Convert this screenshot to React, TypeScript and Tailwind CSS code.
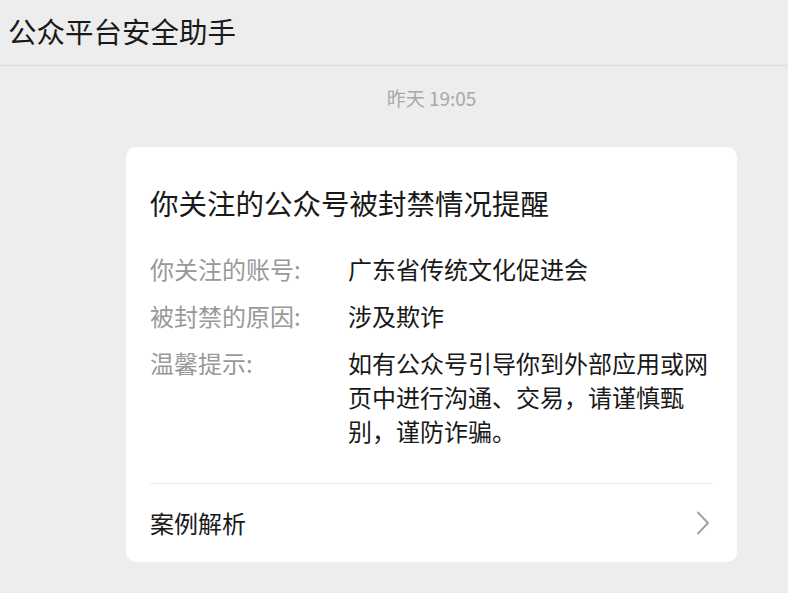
import React from 'react';

const rows = [
  { label: '你关注的账号:', value: '广东省传统文化促进会' },
  { label: '被封禁的原因:', value: '涉及欺诈' },
  { label: '温馨提示:', value: '如有公众号引导你到外部应用或网页中进行沟通、交易，请谨慎甄别，谨防诈骗。' },
];

const App: React.FC = () => {
  return (
    <div
      className="min-h-[593px] w-full bg-[#ededed] text-[#191919]"
      style={{ fontFamily: '"Noto Sans CJK SC", "Noto Sans", sans-serif' }}
    >
      {/* Header */}
      <div className="flex h-[66px] items-center border-b border-[#dcdcdc] px-[8px] pb-[3px]">
        <h1 className="text-[28.5px] leading-[36px] font-normal">公众平台安全助手</h1>
      </div>

      <div className="ml-[126px] w-[611px]">
        {/* Timestamp */}
        <div className="mt-[20px] text-center text-[19px] leading-[24px] text-[#a8a8a8]">昨天 19:05</div>

        {/* Card */}
        <div className="mt-[37px] rounded-[10px] bg-white px-6">
          <h2 className="pt-[34px] text-[28.5px] leading-[44px] font-normal">你关注的公众号被封禁情况提醒</h2>

          <div className="mt-[27px] flex flex-col gap-[13px]">
            {rows.map((row) => (
              <div key={row.label} className="flex text-[24px] leading-[34px]">
                <div className="w-[198px] shrink-0 text-[#999999]">{row.label}</div>
                <div className="w-[362px]">{row.value}</div>
              </div>
            ))}
          </div>

          <div className="mt-[35px] flex h-[79px] items-center justify-between border-t border-[#ececec]">
            <span className="text-[24px] leading-[34px]">案例解析</span>
            <svg width="14" height="26" viewBox="0 0 14 26" className="mr-[3px]">
              <path d="M2 2.5 L12 13 L2 23.5" fill="none" stroke="#a3a3a3" strokeWidth="2" strokeLinecap="round" strokeLinejoin="round" />
            </svg>
          </div>
        </div>
      </div>
    </div>
  );
};

export default App;
